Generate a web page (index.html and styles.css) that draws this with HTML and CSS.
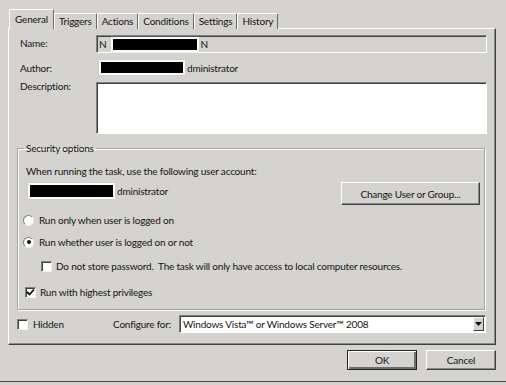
FILE: index.html
```html
<!DOCTYPE html>
<html lang="en">

<head>
    <meta charset="UTF-8">
    <title>Task Properties</title>
    <link rel="stylesheet" href="styles.css">
</head>

<body>
    <div class="dialog">
        <div class="tabs">
            <div class="tab active">General</div>
            <div class="tab">Triggers</div>
            <div class="tab">Actions</div>
            <div class="tab">Conditions</div>
            <div class="tab">Settings</div>
            <div class="tab">History</div>
        </div>

        <div class="panel">
            <div class="form-row name-row">
                <span class="label">Name:</span>
                <div class="field readonly">
                    <span>N</span><span class="redact redact-name"></span><span>N</span>
                </div>
            </div>

            <div class="form-row author-row">
                <span class="label">Author:</span>
                <div class="value"><span class="redact redact-author"></span>dministrator</div>
            </div>

            <div class="form-row desc-row">
                <span class="label">Description:</span>
                <div class="field textarea"></div>
            </div>

            <fieldset class="group">
                <legend>Security options</legend>
                <p class="group-text">When running the task, use the following user account:</p>
                <div class="account-row">
                    <div class="value"><span class="redact redact-account"></span>dministrator</div>
                    <button class="btn change-btn">Change User or Group...</button>
                </div>
                <div class="option opt-1"><span class="radio"></span>Run only when user is logged on</div>
                <div class="option opt-2"><span class="radio checked"></span>Run whether user is logged on or not</div>
                <div class="option opt-3"><span class="checkbox"></span>Do not store password.&nbsp; The task will only have access to local computer resources.</div>
                <div class="option opt-4">
                    <span class="checkbox">
                        <svg width="9" height="9" viewBox="0 0 9 9"><path d="M1 4 L3.5 6.5 L8 1.5" fill="none" stroke="#111" stroke-width="1.8"/></svg>
                    </span>Run with highest privileges
                </div>
            </fieldset>

            <div class="bottom-row">
                <div class="option hidden-opt"><span class="checkbox"></span>Hidden</div>
                <span class="configure-label">Configure for:</span>
                <div class="select">
                    <span>Windows Vista™ or Windows Server™ 2008</span>
                    <span class="arrow"><svg width="7" height="4" viewBox="0 0 7 4"><path d="M0 0 H7 L3.5 4 Z" fill="#111"/></svg></span>
                </div>
            </div>
        </div>

        <div class="actions">
            <button class="btn default">OK</button>
            <button class="btn">Cancel</button>
        </div>
    </div>
</body>

</html>
```

FILE: styles.css
```css
* {
    margin: 0;
    padding: 0;
    box-sizing: border-box;
}

body {
    width: 506px;
    height: 385px;
    overflow: hidden;
    background: #d5d3cf;
    font-family: Lato, 'Open Sans', sans-serif;
    font-size: 10px;
    letter-spacing: -0.2px;
    color: #141414;
    white-space: nowrap;
}

.dialog {
    height: 382px;
    padding: 9px 10px 0 8px;
    border-bottom: 1px solid #4a4a4a;
}

/* tab strip */
.tabs {
    display: flex;
    align-items: flex-end;
    height: 20px;
    padding-left: 1px;
    position: relative;
    z-index: 1;
    margin-bottom: -1px;
}

.tab {
    height: 16px;
    line-height: 15px;
    padding: 0 4px;
    border: 1px solid #fff;
    border-bottom: none;
    border-right-color: #6a6a6a;
    background: #d5d3cf;
}

.tab.active {
    height: 20px;
    line-height: 18px;
    padding: 0 5px;
    margin-right: -2px;
}

.tab.active + .tab {
    margin-left: 2px;
}

/* tab page */
.panel {
    border: 1px solid;
    border-color: #fff #404040 #404040 #fff;
    box-shadow: inset -1px -1px 0 #8a8a8a;
    padding: 6px 0 11px 8px;
}

.form-row {
    display: grid;
    grid-template-columns: 79px 391px;
    align-items: center;
}

.label {
    padding-left: 3px;
}

.name-row .label {
    margin-top: -3px;
}

.field {
    border: 1px solid;
    border-color: #808080 #fff #fff #808080;
    box-shadow: inset 1px 1px 0 #404040;
}

.readonly {
    height: 18px;
    display: flex;
    align-items: center;
    padding-left: 2px;
}

.author-row {
    margin-top: 6px;
    height: 17px;
}

.desc-row {
    margin-top: 6px;
    align-items: start;
}

.desc-row .label {
    margin-top: -2px;
}

.textarea {
    height: 52px;
    background: #fff;
}

.value {
    display: flex;
    align-items: center;
}

.redact {
    display: inline-block;
    background: #000;
    border: 2px solid #fbfbfb;
    box-shadow: 0 0 1px #bbb;
}

.redact-name {
    width: 88px;
    height: 15px;
    margin: 0 1px 0 5px;
}

.redact-author {
    width: 86px;
    height: 15px;
    margin: 0 2px 0 3px;
}

.redact-account {
    width: 87px;
    height: 16px;
    margin: 0 2px 0 2px;
}

/* security group */
.group {
    width: 468px;
    margin-top: 7px;
    border: 1px solid #a4a29d;
    box-shadow: 1px 1px 0 #fff, inset 1px 1px 0 #fff;
    padding: 9px 4px 9px 8px;
}

.group legend {
    padding: 0 2px;
    margin-left: -2px;
    line-height: 14px;
}

.group-text {
    line-height: 15px;
}

.account-row {
    display: flex;
    justify-content: space-between;
    align-items: flex-start;
    margin-top: 3px;
}

.account-row .value {
    margin-top: 1px;
}

.btn {
    font-family: inherit;
    font-size: 10px;
    letter-spacing: -0.2px;
    color: #141414;
    background: #d5d3cf;
    border: 1px solid;
    border-color: #fff #404040 #404040 #fff;
    box-shadow: inset -1px -1px 0 #8a8a8a;
}

.change-btn {
    width: 139px;
    height: 23px;
}

.option {
    display: flex;
    align-items: center;
    height: 16px;
}

.opt-1 {
    margin-top: 7px;
    margin-left: -3px;
}

.opt-2 {
    margin-top: 6px;
    margin-left: -3px;
}

.opt-3 {
    margin-top: 8px;
    margin-left: 15px;
}

.opt-4 {
    margin-top: 10px;
    margin-left: -1px;
}

.radio {
    width: 11px;
    height: 11px;
    border-radius: 50%;
    background: #fff;
    border: 1px solid;
    border-color: #808080 #f0f0f0 #f0f0f0 #808080;
    margin-right: 5px;
    display: flex;
    align-items: center;
    justify-content: center;
}

.radio.checked::after {
    content: "";
    width: 4px;
    height: 4px;
    border-radius: 50%;
    background: #111;
}

.checkbox {
    width: 11px;
    height: 11px;
    background: #fff;
    border: 1px solid;
    border-color: #808080 #f0f0f0 #f0f0f0 #808080;
    box-shadow: inset 1px 1px 0 #404040;
    margin-right: 4px;
    display: flex;
    align-items: center;
    justify-content: center;
}

/* bottom row */
.bottom-row {
    display: flex;
    align-items: center;
    margin-top: 5px;
    height: 18px;
}

.hidden-opt {
    width: 96px;
}

.hidden-opt .checkbox {
    margin-right: 5px;
}

.configure-label {
    width: 66px;
}

.select {
    width: 307px;
    height: 18px;
    background: #fff;
    border: 1px solid;
    border-color: #808080 #fff #fff #808080;
    box-shadow: inset 1px 1px 0 #404040;
    display: flex;
    align-items: center;
    justify-content: space-between;
    padding: 0 1px 0 3px;
}

.arrow {
    width: 11px;
    height: 14px;
    background: #d5d3cf;
    border: 1px solid;
    border-color: #fff #404040 #404040 #fff;
    display: flex;
    align-items: center;
    justify-content: center;
}

/* dialog buttons */
.actions {
    display: flex;
    justify-content: flex-end;
    gap: 9px;
    margin-top: 5px;
}

.actions .btn {
    width: 70px;
    height: 20px;
}

.btn.default {
    border: 1px solid #222;
    box-shadow: inset 1px 1px 0 #fff, inset -2px -2px 0 #707070;
}
```
